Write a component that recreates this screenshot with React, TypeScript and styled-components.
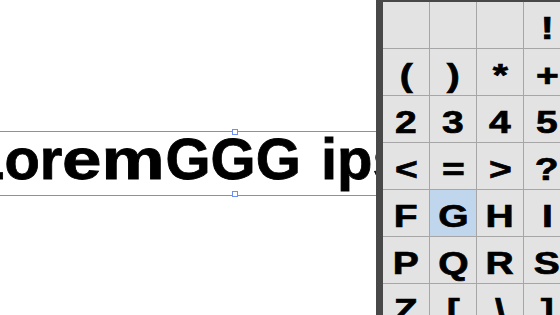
import React from "react";
import styled, { createGlobalStyle } from "styled-components";

const Global = createGlobalStyle`
  html, body { margin: 0; padding: 0; background: #ffffff; }
  body { width: 560px; height: 315px; overflow: hidden; font-family: "Liberation Sans", Arial, sans-serif; }
`;

const Screen = styled.div`
  display: flex;
  width: 560px;
  height: 315px;
  overflow: hidden;
`;

const Canvas = styled.div`
  flex: 0 0 376px;
  height: 100%;
  box-sizing: border-box;
  padding-top: 131px;
  background: #ffffff;
  overflow: hidden;
  display: flex;
  flex-direction: column;
  align-items: flex-start;
`;

const Frame = styled.div`
  position: relative;
  flex: 0 0 auto;
  margin-left: -40px;
  width: 550px;
  height: 65px;
  box-sizing: border-box;
  padding-left: 9px;
  border-top: 1px solid #6f90f2;
  border-bottom: 1px solid #6f90f2;
  display: flex;
  align-items: flex-start;
`;

const Handle = styled.div<{ $edge: "top" | "bottom" }>`
  position: absolute;
  left: calc(50% - 3px);
  ${(p) => (p.$edge === "top" ? "top: -3px;" : "bottom: -2px;")}
  width: 6px;
  height: 6px;
  box-sizing: border-box;
  border: 1px solid #6f90f2;
  background: #ffffff;
`;

const Word = styled.div`
  font-family: "Liberation Sans", Arial, sans-serif;
  font-weight: 700;
  font-size: 58px;
  line-height: 54px;
  height: 54px;
  color: #000000;
  white-space: nowrap;
  word-spacing: 4px;
  -webkit-text-stroke: 0.8px #000;
`;

const Stretch = styled.span<{ $w: number; $s: number }>`
  display: inline-block;
  width: ${(p) => p.$w}px;
  transform: scaleX(${(p) => p.$s});
  transform-origin: left center;
`;

const Panel = styled.div`
  flex: 0 0 184px;
  height: 100%;
  box-sizing: border-box;
  border-left: 7px solid #484848;
  border-top: 2px solid #484848;
  background: #a6a6a6;
  overflow: hidden;
`;

const Grid = styled.div`
  display: grid;
  grid-template-columns: repeat(10, 46px);
  grid-auto-rows: 46px;
  gap: 1px;
  width: max-content;
`;

const Cell = styled.div<{ $active?: boolean }>`
  display: flex;
  justify-content: center;
  background: ${(p) => (p.$active ? "#c0d6ec" : "#e3e3e3")};
  height: 46px;
  overflow: hidden;
`;

const Glyph = styled.span`
  display: inline-block;
  color: #000;
  font-family: "Liberation Sans", Arial, sans-serif;
  font-weight: 700;
  font-size: 32px;
  line-height: 52px;
  transform: scaleX(1.22);
  -webkit-text-stroke: 0.7px #000;
`;

const rows: string[][] = [
  ["", "", "", "!", "\"", "#", "$", "%", "&", "'"],
  ["(", ")", "*", "+", ",", "-", ".", "/", "0", "1"],
  ["2", "3", "4", "5", "6", "7", "8", "9", ":", ";"],
  ["<", "=", ">", "?", "@", "A", "B", "C", "D", "E"],
  ["F", "G", "H", "I", "J", "K", "L", "M", "N", "O"],
  ["P", "Q", "R", "S", "T", "U", "V", "W", "X", "Y"],
  ["Z", "[", "\\", "]", "^", "_", "`", "a", "b", "c"],
];

export default function App() {
  return (
    <>
      <Global />
      <Screen>
        <Canvas>
          <Frame>
            <Word>
              Lor
              <Stretch $w={103} $s={1.225}>em</Stretch>
              GGG ips
            </Word>
            <Handle $edge="top" />
            <Handle $edge="bottom" />
          </Frame>
        </Canvas>
        <Panel>
          <Grid>
            {rows.flatMap((r, ri) =>
              r.map((c, ci) => (
                <Cell key={`${ri}-${ci}`} $active={c === "G"}>
                  <Glyph>{c}</Glyph>
                </Cell>
              ))
            )}
          </Grid>
        </Panel>
      </Screen>
    </>
  );
}
